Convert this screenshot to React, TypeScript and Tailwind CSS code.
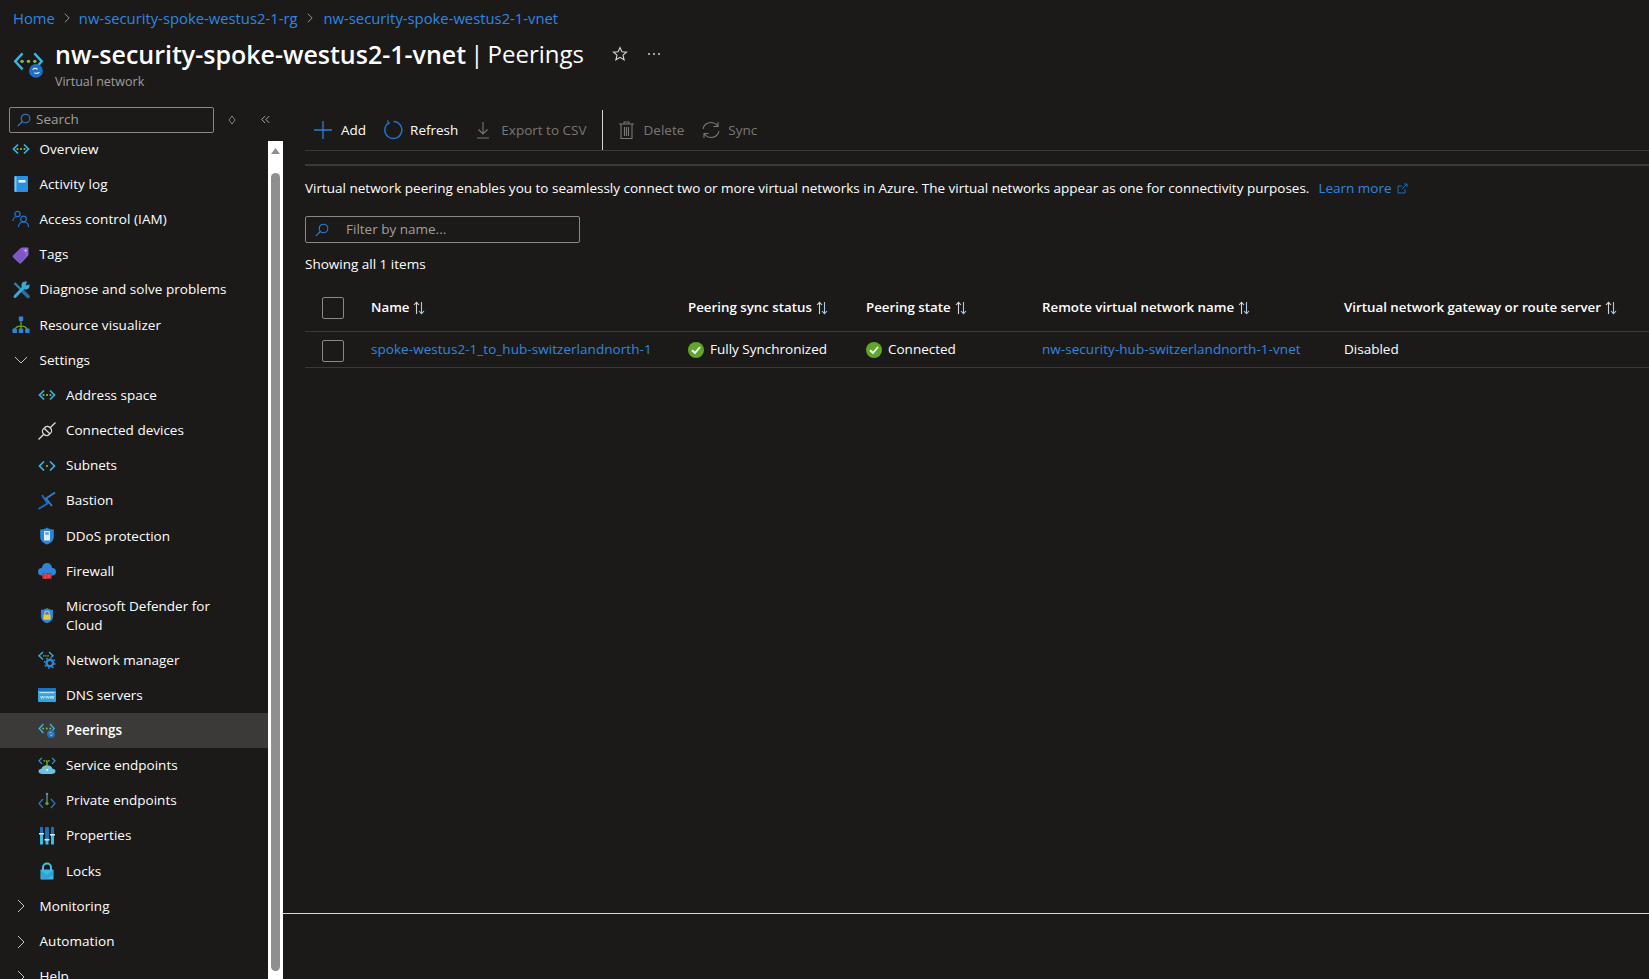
import type { ReactNode } from "react";

const sans = "font-['Open_Sans','Liberation_Sans',sans-serif]";

function Vnet({ dots = 3, className = "w-[18px] h-[18px]" }: { dots?: number; className?: string }) {
  return (
    <svg viewBox="0 0 18 18" className={className} fill="none">
      <path d="M6 4.5 1.5 9 6 13.5" stroke="#38b6e8" strokeWidth="1.7" />
      <path d="M12 4.5 16.5 9 12 13.5" stroke="#38b6e8" strokeWidth="1.7" />
      {dots === 3 && <circle cx="5.5" cy="9" r="1.1" fill="#86c03f" />}
      <circle cx="9" cy="9" r="1.1" fill="#86c03f" />
      {dots >= 2 && <circle cx="12.5" cy="9" r="1.1" fill="#86c03f" />}
    </svg>
  );
}

function PeeringIcon({ className }: { className: string }) {
  return (
    <svg viewBox="0 0 30 30" className={className} fill="none">
      <path d="M9 5 2 12.5 9 20" stroke="#38b6e8" strokeWidth="2.2" />
      <path d="M20 5 27 12.5 20 20" stroke="#38b6e8" strokeWidth="2.2" />
      <circle cx="8.5" cy="12.5" r="1.6" fill="#86c03f" />
      <circle cx="14.5" cy="12.5" r="1.6" fill="#86c03f" />
      <circle cx="20.5" cy="12.5" r="1.6" fill="#86c03f" />
      <circle cx="21.5" cy="21.5" r="6.5" fill="#1f6fc4" />
      <path d="M18.5 20.5c.6-1.6 3.6-1.9 4.4-.4M24.5 22.5c-.6 1.6-3.6 1.9-4.4.4" stroke="#d6ecff" strokeWidth="1.2" />
    </svg>
  );
}

function Book() {
  return (
    <svg viewBox="0 0 18 18" className="w-[18px] h-[18px]">
      <rect x="2.5" y="1" width="13.5" height="16" rx="1" fill="#2a8fe0" />
      <rect x="2.5" y="1" width="2" height="16" rx="1" fill="#7cc4f2" />
      <rect x="6.5" y="5" width="7" height="2.6" fill="#e8f4fc" />
    </svg>
  );
}

function People() {
  return (
    <svg viewBox="0 0 18 18" className="w-[18px] h-[18px]" fill="none" stroke="#1f74cf" strokeWidth="1.2">
      <circle cx="5.5" cy="4" r="2.6" />
      <path d="M1 11c0-3 2-4.5 4.5-4.5" />
      <circle cx="11.5" cy="9" r="2.8" />
      <path d="M6.5 17c0-3 2-5 5-5s5 2 5 5" />
    </svg>
  );
}

function Tag() {
  return (
    <svg viewBox="0 0 18 18" className="w-[18px] h-[18px]">
      <path d="M1 9.5 8.5 2.2c.5-.5 1-.7 1.7-.7h5c.8 0 1.3.5 1.3 1.3v5.500c0 .6-.2 1.2-.7 1.6L9 17.2c-.5.5-1.2.5-1.7 0L1 11.2c-.5-.5-.5-1.2 0-1.7z" fill="#8d63d2" />
      <path d="M1 10 9 2.2l5.5 7.5L8 17z" fill="#6f46b8" opacity=".45" />
      <circle cx="13.6" cy="4.4" r="1" fill="#e6dcf7" />
    </svg>
  );
}

function Wrench() {
  return (
    <svg viewBox="0 0 18 18" className="w-[18px] h-[18px]" fill="none">
      <path d="M2.5 2 11 10.5" stroke="#2e86b8" strokeWidth="2.2" />
      <path d="M10.5 10 16 15.5" stroke="#2a6f96" strokeWidth="3.6" strokeLinecap="round" />
      <path d="M3 15.5 12 6" stroke="#38a9dc" strokeWidth="3" strokeLinecap="round" />
      <circle cx="13.5" cy="4.5" r="4" fill="#38a9dc" />
      <path d="M13.6 4.4 15.5 -.5 19 3z" fill="#1b1a19" />
    </svg>
  );
}

function Tree() {
  return (
    <svg viewBox="0 0 18 18" className="w-[18px] h-[18px]" fill="none">
      <path d="M9 4v9M2.5 14c1-3 4-4 6.5-4s5.500 1 6.500 4" stroke="#7fba00" strokeWidth="1.1" />
      <rect x="6.8" y=".5" width="4.4" height="4.4" rx=".5" fill="#2e86d8" />
      <rect x=".5" y="12.5" width="4.4" height="4.4" rx=".5" fill="#2e86d8" />
      <rect x="6.8" y="12.5" width="4.4" height="4.4" rx=".5" fill="#2e86d8" />
      <rect x="13.1" y="12.5" width="4.4" height="4.4" rx=".5" fill="#2e86d8" />
    </svg>
  );
}

function Plug() {
  return (
    <svg viewBox="0 0 18 18" className="w-[18px] h-[18px]" fill="none" stroke="#dcdad8" strokeWidth="1.3">
      <g transform="rotate(-45 9 9)">
        <rect x="4.5" y="5" width="9" height="8" rx="3.5" />
        <path d="M9 5v8M-3 9h7.5M13.5 9H21" />
      </g>
    </svg>
  );
}

function Bastion() {
  return (
    <svg viewBox="0 0 18 18" className="w-[18px] h-[18px]" fill="none" stroke="#1a6fc2" strokeWidth="1.8">
      <path d="M.5 17 9.5 11.5 4 3" />
      <path d="M17 .5 8 6.5 14 14" stroke="#2a83d8" />
    </svg>
  );
}

function Shield({ lock = false, small = false }: { lock?: boolean; small?: boolean }) {
  return (
    <svg viewBox="0 0 18 18" className={small ? "w-[16px] h-[17px]" : "w-[18px] h-[18px]"}>
      <path d="M9 .5c1.8 1.4 4.2 2 6.8 2V10c0 3.6-3.2 6.300-6.800 7.500C5.400 16.300 2.200 13.600 2.200 10V2.500C4.800 2.500 7.200 1.900 9 .5z" fill="#2a87dc" />
      {lock ? (
        <>
          <rect x="5" y="8" width="8" height="5.8" fill="#f5c63a" />
          <path d="M6.500 8V6.500a2.500 2.500 0 0 1 5 0V8" fill="none" stroke="#f5c63a" strokeWidth="1.2" />
        </>
      ) : (
        <>
          <rect x="6" y="4" width="6" height="9.5" rx=".5" fill="#dcecf8" />
          <rect x="7.2" y="5.2" width="3.6" height="2.5" fill="#6f9fc8" />
        </>
      )}
    </svg>
  );
}

function Firewall() {
  return (
    <svg viewBox="0 0 18 18" className="w-[18px] h-[18px]">
      <circle cx="9" cy="6" r="5" fill="#2f84d8" />
      <circle cx="3.8" cy="9.8" r="3.8" fill="#2f84d8" />
      <circle cx="14.2" cy="9.8" r="3.8" fill="#2f84d8" />
      <rect x="4" y="6" width="10" height="7.5" fill="#2f84d8" />
      <rect x="4.5" y="11" width="9" height="6" fill="#c5232f" />
      <path d="M4.500 13h9M4.500 15h9M7.500 11v2M10.500 13v2M7.500 15v2" stroke="#f0848a" strokeWidth=".5" />
    </svg>
  );
}

function NetworkManager() {
  return (
    <svg viewBox="0 0 18 18" className="w-[18px] h-[18px]" fill="none">
      <path d="M5 1 1 4.800 5 8.500M11 1l4 3.800L13.500 6" stroke="#38b6e8" strokeWidth="1.3" />
      <path d="M5 4.800h6" stroke="#86c03f" strokeWidth="1.3" strokeDasharray="1.4 .8" />
      <circle cx="11.8" cy="12" r="3.3" stroke="#2e86d8" strokeWidth="2.4" />
      <circle cx="11.8" cy="12" r="5.3" stroke="#2e86d8" strokeWidth="1.3" strokeDasharray="1.8 2.3" />
    </svg>
  );
}

function Dns() {
  return (
    <svg viewBox="0 0 18 18" className="w-[18px] h-[18px]">
      <rect y="2" width="18" height="14" rx="1" fill="#35a4dd" />
      <rect y="2" width="18" height="3" fill="#1c74bd" />
      <rect x="1.5" y="6" width="15" height="1.2" fill="#b5e2f7" />
      <path d="M2.500 10l1 2.500 1-2.500 1 2.500 1-2.500M7.500 10l1 2.500 1-2.500 1 2.500 1-2.500M12 10l1 2.500 1-2.500 1 2.500 1-2.500" fill="none" stroke="#eaf7fd" strokeWidth=".7" />
    </svg>
  );
}

function ServiceEndpoint() {
  return (
    <svg viewBox="0 0 18 18" className="w-[18px] h-[18px]" fill="none">
      <path d="M4 .8 1 3.800 4 6.800M14 .8l3 3-3 3" stroke="#2f9ccf" strokeWidth="1.2" />
      <path d="M4.500 17c-2.200 0-4-1.100-4-2.800 0-1.500 1.300-2.500 3-2.500.5-2 2.600-3.500 5.500-3.500s5 1.500 5.500 3.500c1.700 0 3 1 3 2.500 0 1.700-1.800 2.800-4 2.800z" fill="#6cbfe6" />
      <path d="M9 4v9" stroke="#86c03f" strokeWidth="1.2" />
      <path d="M5.500 3.800h7" stroke="#86c03f" strokeWidth="1.2" strokeDasharray="1.5 .8" />
      <circle cx="9" cy="13" r="1" fill="#e8f4fc" />
    </svg>
  );
}

function PrivateEndpoint() {
  return (
    <svg viewBox="0 0 18 18" className="w-[18px] h-[18px]" fill="none">
      <path d="M5 7 1 11.500 5 16M13 7l4 4.500L13 16" stroke="#2a7fb8" strokeWidth="1.2" />
      <path d="M9 2v9" stroke="#6e8ea8" strokeWidth="1.3" />
      <circle cx="9" cy="2" r="1.2" fill="#5d96c4" />
      <circle cx="9" cy="11.5" r="1.7" fill="#5ea52c" />
    </svg>
  );
}

function Sliders() {
  return (
    <svg viewBox="0 0 18 18" className="w-[18px] h-[18px]">
      <rect x="2" y=".5" width="3" height="17" fill="#38bdf0" />
      <rect x="2" y=".5" width="3" height="5.5" fill="#1c6fc0" />
      <rect x="7.5" y=".5" width="3" height="17" fill="#38bdf0" />
      <rect x="7.5" y=".5" width="3" height="11" fill="#1c6fc0" />
      <rect x="13" y=".5" width="3" height="17" fill="#38bdf0" />
      <rect x="13" y=".5" width="3" height="6.5" fill="#1c6fc0" />
      <rect x="1" y="6" width="5" height="1.5" fill="#e8e8e8" />
      <rect x="6.5" y="12" width="5" height="1.5" fill="#e8e8e8" />
      <rect x="12" y="7" width="5" height="1.5" fill="#e8e8e8" />
    </svg>
  );
}

function LockIcon() {
  return (
    <svg viewBox="0 0 18 18" className="w-[18px] h-[18px]">
      <path d="M5 8V5.500a4 4 0 0 1 8 0V8" fill="none" stroke="#3fc0ee" strokeWidth="2" />
      <rect x="2.5" y="7.5" width="13" height="10" rx=".8" fill="#3fb8e6" />
      <path d="M2.500 8 9 13l6.500-5v5l-6.500 4.500H4z" fill="#2a94cc" opacity=".6" />
    </svg>
  );
}

function Chevron({ open = false, className = "w-[14px] h-[14px]" }: { open?: boolean; className?: string }) {
  return (
    <svg viewBox="0 0 14 14" className={className} fill="none" stroke="#c8c6c4" strokeWidth="1">
      {open ? <path d="M1 4l6 6 6-6" /> : <path d="M4 1l6 6-6 6" />}
    </svg>
  );
}

function SearchGlass({ className = "w-[14px] h-[14px]" }: { className?: string }) {
  return (
    <svg viewBox="0 0 14 14" className={className} fill="none" stroke="#2a7ed6" strokeWidth="1.1">
      <circle cx="8.5" cy="5.5" r="4.3" />
      <path d="M5.300 8.500.8 13.200" />
    </svg>
  );
}

function SortArrows() {
  return (
    <svg viewBox="0 0 12 14" className="w-[12px] h-[14px] shrink-0" fill="none" stroke="#d8d6d4" strokeWidth="1.1">
      <path d="M3.500 13V1.500M1 4l2.500-2.700L6 4" />
      <path d="M8.500 1v11.500M6 10l2.500 2.700L11 10" stroke="#a9c9e8" />
    </svg>
  );
}

function GreenCheck() {
  return (
    <svg viewBox="0 0 16 16" className="w-[16px] h-[16px] shrink-0">
      <circle cx="8" cy="8" r="8" fill="#5fa62a" />
      <path d="M4 8.300 7 11l5-6" fill="none" stroke="#fff" strokeWidth="1.9" />
    </svg>
  );
}

function NavRow({ icon, label, child = false, active = false, tall = false }: { icon: ReactNode; label: string; child?: boolean; active?: boolean; tall?: boolean }) {
  return (
    <div className={`flex items-center ${tall ? "h-[53.5px]" : "h-[35.2px]"} ${active ? "bg-[#3b3a39] font-semibold" : ""} ${child ? "pl-[38px]" : "pl-[12px]"}`}>
      <span className="w-[18px] h-[18px] flex items-center justify-center shrink-0">{icon}</span>
      <span className={`${child ? "ml-[10px]" : "ml-[9.5px] tracking-[0.06px]"} leading-[19px] text-white ${tall ? "w-[160px]" : "whitespace-nowrap"}`}>{label}</span>
    </div>
  );
}

function ToolButton({ icon, label, disabled = false, className = "" }: { icon: ReactNode; label: string; disabled?: boolean; className?: string }) {
  return (
    <div className={`flex items-center ${className}`}>
      {icon}
      <span className={disabled ? "text-[#797775]" : "text-white"}>{label}</span>
    </div>
  );
}

function Checkbox() {
  return <div className="w-[22px] h-[22px] rounded-[2px] border border-[#8a8886]" />;
}

const rowGrid = "grid grid-cols-[66px_317px_178px_176px_302px_1fr] items-center whitespace-nowrap";

function HeaderCell({ label }: { label: string }) {
  return (
    <div className="flex items-center gap-[4px] font-semibold text-[13.3px] text-white">
      {label}
      <SortArrows />
    </div>
  );
}

export default function App() {
  return (
    <div className={`${sans} w-[1649px] h-[979px] overflow-hidden bg-[#1b1a19] text-[13.5px] text-white flex flex-col`}>
      <div className="h-[107px] shrink-0">
        <div className="flex items-center h-[36px] pl-[13px] text-[14.8px] text-[#2f86e0]">
          <span>Home</span>
          <Chevron className="w-[10px] h-[10px] mx-[7px]" />
          <span>nw-security-spoke-westus2-1-rg</span>
          <Chevron className="w-[10px] h-[10px] ml-[7px] mr-[9px]" />
          <span>nw-security-spoke-westus2-1-vnet</span>
        </div>
        <div className="flex items-start pl-[13px]">
          <PeeringIcon className="w-[32px] h-[32px] mt-[12px]" />
          <div className="ml-[10px]">
            <div className="flex items-center h-[36px] text-[24px] leading-[36px] whitespace-nowrap">
              <span className="font-semibold text-[25px]">nw-security-spoke-westus2-1-vnet</span>
              <span className="ml-[4px] [word-spacing:-2px]">| Peerings</span>
              <svg viewBox="0 0 16 16" className="w-[16px] h-[16px] ml-[28px]" fill="none" stroke="#d8d6d4" strokeWidth="1.1">
                <path d="M8 1.500l1.900 4.300 4.600.4-3.500 3 1.100 4.600L8 11.300l-4.100 2.500L5 9.200l-3.500-3 4.600-.4z" />
              </svg>
              <span className="ml-[20px] flex gap-[3px]">
                <i className="w-[2px] h-[2px] bg-[#a19f9d]" />
                <i className="w-[2px] h-[2px] bg-[#a19f9d]" />
                <i className="w-[2px] h-[2px] bg-[#a19f9d]" />
              </span>
            </div>
            <div className="text-[12.5px] text-[#a19f9d] leading-[18px] mt-[1px]">Virtual network</div>
          </div>
        </div>
      </div>

      <div className="flex flex-1 min-h-0">
        <div className="w-[283px] shrink-0 flex flex-col">
          <div className="h-[34px] shrink-0 flex items-start pl-[9px]">
            <div className="w-[205px] h-[26px] border border-[#8a8886] rounded-[2px] flex items-center pl-[7px] pb-[1px]">
              <SearchGlass />
              <span className="ml-[5px] text-[#a19f9d]">Search</span>
            </div>
            <svg viewBox="0 0 8 10" className="w-[8px] h-[10px] ml-[14px] mt-[8px]" fill="none" stroke="#a19f9d" strokeWidth=".8">
              <path d="M4 1 7 5 4 9 1 5z" />
            </svg>
            <svg viewBox="0 0 12 10" className="w-[10px] h-[9px] ml-[24px] mt-[8px]" fill="none" stroke="#c8c6c4" strokeWidth="1">
              <path d="M6 1 2 5l4 4M11 1 7 5l4 4" />
            </svg>
          </div>
          <div className="flex flex-1 min-h-0">
            <div className="w-[268px] overflow-hidden">
              <div className="-mt-[9.5px]">
                <NavRow icon={<Vnet />} label="Overview" />
                <NavRow icon={<Book />} label="Activity log" />
                <NavRow icon={<People />} label="Access control (IAM)" />
                <NavRow icon={<Tag />} label="Tags" />
                <NavRow icon={<Wrench />} label="Diagnose and solve problems" />
                <NavRow icon={<Tree />} label="Resource visualizer" />
                <NavRow icon={<Chevron open />} label="Settings" />
                <NavRow child icon={<Vnet />} label="Address space" />
                <NavRow child icon={<Plug />} label="Connected devices" />
                <NavRow child icon={<Vnet dots={1} />} label="Subnets" />
                <NavRow child icon={<Bastion />} label="Bastion" />
                <NavRow child icon={<Shield />} label="DDoS protection" />
                <NavRow child icon={<Firewall />} label="Firewall" />
                <NavRow child tall icon={<Shield lock small />} label="Microsoft Defender for Cloud" />
                <NavRow child icon={<NetworkManager />} label="Network manager" />
                <NavRow child icon={<Dns />} label="DNS servers" />
                <NavRow child active icon={<PeeringIcon className="w-[18px] h-[18px]" />} label="Peerings" />
                <NavRow child icon={<ServiceEndpoint />} label="Service endpoints" />
                <NavRow child icon={<PrivateEndpoint />} label="Private endpoints" />
                <NavRow child icon={<Sliders />} label="Properties" />
                <NavRow child icon={<LockIcon />} label="Locks" />
                <NavRow icon={<Chevron />} label="Monitoring" />
                <NavRow icon={<Chevron />} label="Automation" />
                <NavRow icon={<Chevron />} label="Help" />
              </div>
            </div>
            <div className="w-[15px] bg-white flex flex-col items-center pt-[7px]">
              <svg viewBox="0 0 9 6" className="w-[9px] h-[6px]"><path d="M4.500 0 9 6H0z" fill="#8f8f8f" /></svg>
              <div className="w-[9px] flex-1 mt-[19px] mb-[8px] bg-[#8f8f8f] rounded-[4.5px]" />
            </div>
          </div>
        </div>

        <div className="flex-1 min-w-0 flex flex-col">
          <div className="h-[806px] shrink-0 pl-[22px] border-b border-[#d8d6d4] box-content">
            <div className="h-[44px] pt-[3px] flex items-center border-b border-[#3b3a39]">
              <ToolButton
                label="Add"
                className="ml-[9px]"
                icon={<svg viewBox="0 0 18 18" className="w-[18px] h-[18px] mr-[9px]" fill="none" stroke="#2a7ed6" strokeWidth="1.3"><path d="M9 0v18M0 9h18" /></svg>}
              />
              <ToolButton
                label="Refresh"
                className="ml-[17px]"
                icon={<svg viewBox="0 0 20 20" className="w-[20px] h-[20px] mr-[7px]" fill="none" stroke="#1f74cf" strokeWidth="1.5"><path d="M5.500 3a8.500 8.500 0 1 0 5-1.500M4.500 .5l1.500 2.700L3.300 5" /></svg>}
              />
              <ToolButton
                disabled
                label="Export to CSV"
                className="ml-[18px]"
                icon={<svg viewBox="0 0 14 18" className="w-[14px] h-[18px] mr-[11px]" fill="none" stroke="#797775" strokeWidth="1.1"><path d="M7 1v12M2.500 8.500 7 13l4.500-4.500M1 17h12" /></svg>}
              />
              <div className="w-px h-[40px] bg-[#d8d6d4] ml-[15px]" />
              <ToolButton
                disabled
                label="Delete"
                className="ml-[16px]"
                icon={<svg viewBox="0 0 15 18" className="w-[15px] h-[18px] mr-[10px]" fill="none" stroke="#797775" strokeWidth="1.1"><path d="M0 3h15M5 3V1h5v2M2 3v14.500h11V3M5.500 6v9M7.500 6v9M9.500 6v9" /></svg>}
              />
              <ToolButton
                disabled
                label="Sync"
                className="ml-[18px]"
                icon={<svg viewBox="0 0 18 18" className="w-[18px] h-[18px] mr-[8px]" fill="none" stroke="#797775" strokeWidth="1.1"><path d="M1 8c.5-4 4-6.500 8-6.500 3 0 5 1.500 6.500 3.500M16 1v4.500h-4.500M17 10c-.5 4-4 6.500-8 6.500-3 0-5-1.500-6.500-3.500M2 17v-4.500h4.500" /></svg>}
              />
            </div>
            <div className="h-[2px] bg-[#3b3a39] mt-[13px]" />
            <div className="flex items-center h-[18px] mt-[13px] whitespace-nowrap">
              <span>Virtual network peering enables you to seamlessly connect two or more virtual networks in Azure. The virtual networks appear as one for connectivity purposes.</span>
              <span className="ml-[9px] text-[#2f86e0]">Learn more</span>
              <svg viewBox="0 0 11 11" className="w-[11px] h-[11px] ml-[5px]" fill="none" stroke="#1f74cf" strokeWidth=".9"><path d="M8 6v4H1V3h4M5 6l5-5M7 1h3v3" /></svg>
            </div>
            <div className="w-[275px] h-[27px] mt-[19px] border border-[#8a8886] rounded-[2px] flex items-center pl-[9px]">
              <SearchGlass />
              <span className="ml-[17px] text-[#a19f9d]">Filter by name...</span>
            </div>
            <div className="mt-[12px] h-[18px] leading-[18px]">Showing all 1 items</div>
            <div className={`${rowGrid} h-[49px] pt-[2px] mt-[10px] border-b border-[#3b3a39]`}>
              <div className="pl-[17px]"><Checkbox /></div>
              <HeaderCell label="Name" />
              <HeaderCell label="Peering sync status" />
              <HeaderCell label="Peering state" />
              <HeaderCell label="Remote virtual network name" />
              <HeaderCell label="Virtual network gateway or route server" />
            </div>
            <div className={`${rowGrid} h-[36px] border-b border-[#3b3a39]`}>
              <div className="pl-[17px] pt-[2px]"><Checkbox /></div>
              <span className="text-[#2f86e0] tracking-[0.05px]">spoke-westus2-1_to_hub-switzerlandnorth-1</span>
              <span className="flex items-center gap-[6px]"><GreenCheck />Fully Synchronized</span>
              <span className="flex items-center gap-[6px]"><GreenCheck />Connected</span>
              <span className="text-[#2f86e0] tracking-[0.05px]">nw-security-hub-switzerlandnorth-1-vnet</span>
              <span>Disabled</span>
            </div>
          </div>
        </div>
      </div>
    </div>
  );
}
